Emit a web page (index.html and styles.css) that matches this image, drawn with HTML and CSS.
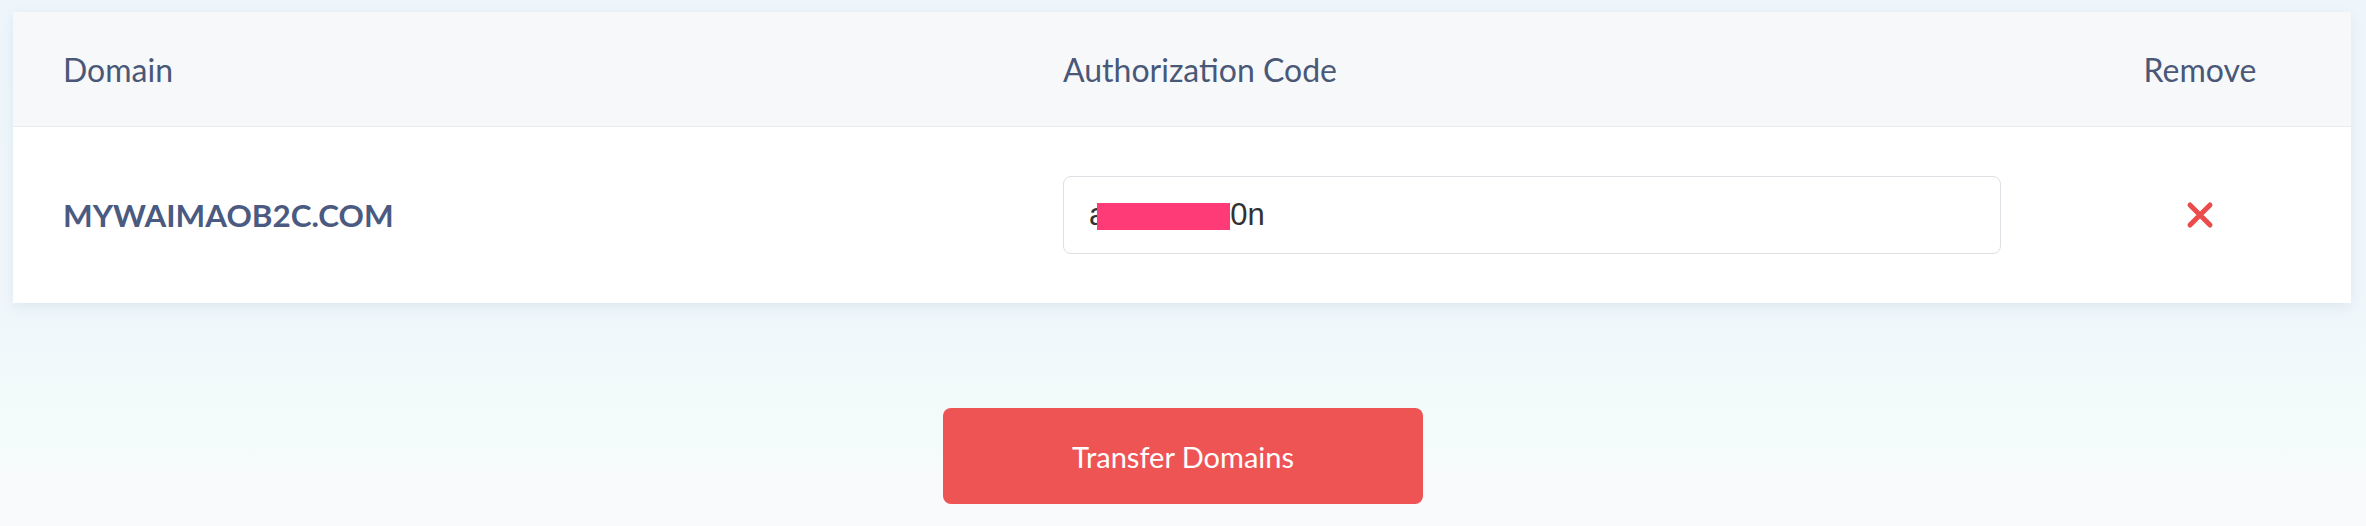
FILE: index.html
```html
<!DOCTYPE html>
<html lang="en">
<head>
<meta charset="utf-8">
<title>Transfer Domains</title>
<link rel="stylesheet" href="styles.css">
</head>
<body>
<div class="page">
  <div class="card">
    <div class="thead">
      <div class="cell">Domain</div>
      <div class="cell">Authorization Code</div>
      <div class="cell center">Remove</div>
    </div>
    <div class="trow">
      <div class="cell domain">MYWAIMAOB2C.COM</div>
      <div class="cell">
        <div class="code-input">a<span class="redact"></span>0n</div>
      </div>
      <div class="cell center">
        <svg class="remove-icon" width="28" height="28" viewBox="0 0 28 28" aria-label="Remove">
          <path d="M4 4 L24 24 M24 4 L4 24" stroke="#ea4c4c" stroke-width="5" stroke-linecap="round" fill="none"/>
        </svg>
      </div>
    </div>
  </div>
  <div class="actions">
    <button class="btn-transfer">Transfer Domains</button>
  </div>
</div>
</body>
</html>
```
FILE: styles.css
```css
html, body {
  margin: 0;
  padding: 0;
}
body {
  min-height: 526px;
  font-family: Lato, "Open Sans", Arial, sans-serif;
  background: linear-gradient(180deg, #eef6fc 0%, #eff7fb 60%, #f2fbfa 74%, #f3fcfa 84%, #f8fafc 90%, #f9fafc 100%);
}
.page {
  padding: 12px 15px 0 13px;
}
.card {
  background: #ffffff;
  box-shadow: 0 4px 12px rgba(50, 80, 130, 0.09);
}
.thead, .trow {
  display: grid;
  grid-template-columns: 1000px 1036px 1fr;
  align-items: center;
}
.thead {
  height: 114px;
  background: #f7f8fa;
  border-bottom: 1px solid #e8ebef;
  color: #4a5878;
  font-size: 32px;
}
.trow {
  height: 176px;
}
.cell {
  padding-left: 50px;
}
.cell.center {
  padding-left: 0;
  text-align: center;
}
.domain {
  font-size: 31.4px;
  font-weight: 700;
  color: #4a5a80;
}
.code-input {
  box-sizing: border-box;
  width: 938px;
  height: 78px;
  border: 1px solid #dcdfe3;
  border-radius: 8px;
  padding-left: 25px;
  display: flex;
  align-items: center;
  font-family: "Liberation Sans", Arial, sans-serif;
  font-size: 31px;
  color: #333333;
  background: #ffffff;
}
.redact {
  display: inline-block;
  width: 133px;
  height: 27px;
  margin-left: -9px;
  margin-top: 2px;
  background: #ff3b77;
}
.remove-icon {
  display: inline-block;
  vertical-align: middle;
}
.actions {
  display: flex;
  justify-content: center;
  padding-top: 105px;
  padding-left: 2px;
}
.btn-transfer {
  width: 480px;
  height: 96px;
  border: 0;
  border-radius: 8px;
  background: #ef5454;
  color: #ffffff;
  font-family: Lato, "Open Sans", Arial, sans-serif;
  font-size: 29px;
}
```
